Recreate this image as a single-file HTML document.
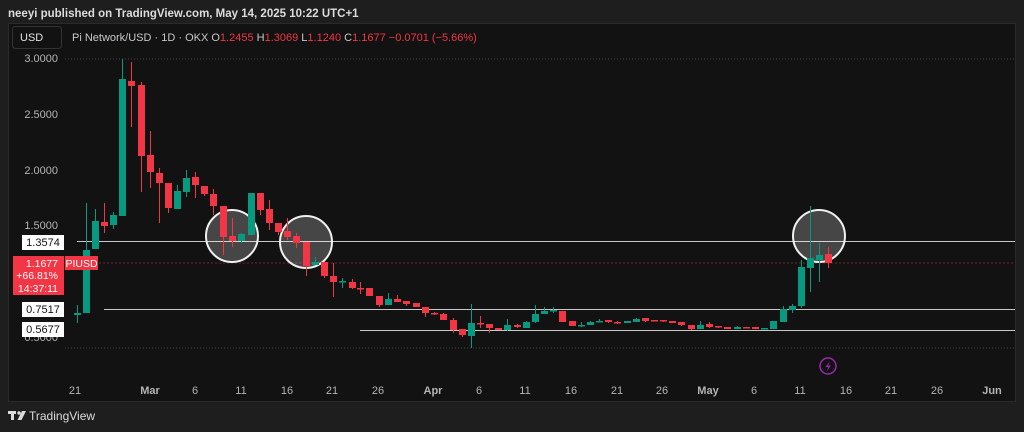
<!DOCTYPE html>
<html><head><meta charset="utf-8"><style>
html,body{margin:0;padding:0;background:#1e1e1e;width:1024px;height:432px;overflow:hidden;font-family:"Liberation Sans",sans-serif}
</style></head><body>
<svg width="1024" height="432" xmlns="http://www.w3.org/2000/svg" font-family="Liberation Sans, sans-serif">
<rect x="0" y="0" width="1024" height="432" fill="#1e1e1e"/>
<text x="8" y="17" fill="#dcdcdc" font-size="11.5" font-weight="bold">neeyi published on TradingView.com, May 14, 2025 10:22 UTC+1</text>
<rect x="8.5" y="23.5" width="1007" height="378" fill="#121212" stroke="#2a2a2a"/>
<rect x="12.5" y="26.5" width="49" height="22" rx="3" fill="#121212" stroke="#333"/>
<text x="20" y="41" fill="#e0e0e0" font-size="11">USD</text>
<text x="72" y="41" font-size="11" fill="#c8c8c8">Pi Network/USD · 1D · OKX  O<tspan fill="#f23645">1.2455</tspan>  H<tspan fill="#f23645">1.3069</tspan>  L<tspan fill="#f23645">1.1240</tspan>  C<tspan fill="#f23645">1.1677  −0.0701 (−5.66%)</tspan></text>
<g fill="#b4b4b4" font-size="11" text-anchor="end">
<text x="58" y="62">3.0000</text><text x="58" y="118">2.5000</text><text x="58" y="174">2.0000</text><text x="58" y="229">1.5000</text><text x="58" y="341">0.5000</text>
</g>
<line x1="65" y1="59" x2="1015" y2="59" stroke="#444" stroke-dasharray="1 2"/>
<line x1="65" y1="348" x2="1015" y2="348" stroke="#444" stroke-dasharray="1 2"/>
<line x1="95" y1="263" x2="1015" y2="263" stroke="#6a2a30" stroke-dasharray="2 2"/>
<line x1="77" y1="241.5" x2="1015" y2="241.5" stroke="#c8c8c8"/>
<line x1="104" y1="309.5" x2="1015" y2="309.5" stroke="#c8c8c8"/>
<line x1="360" y1="330.5" x2="1015" y2="330.5" stroke="#c8c8c8"/>

<circle cx="232" cy="236" r="26" fill="rgba(255,255,255,0.22)" stroke="#f0f0f0" stroke-width="2"/>
<circle cx="306" cy="242" r="26" fill="rgba(255,255,255,0.22)" stroke="#f0f0f0" stroke-width="2"/>
<circle cx="819" cy="236" r="26" fill="rgba(255,255,255,0.22)" stroke="#f0f0f0" stroke-width="2"/>

<path stroke="#089981" fill="none" d="M77.5 305V323M86.5 203V313M95.5 209V249M113.5 212V229M122.5 59V216M177.5 185V209M186.5 170V197M241.5 233V243M251.5 193V235M315.5 257V265M342.5 278V288M388.5 293V305M471.5 304V348M507.5 319V331M526.5 321V328M535.5 305V323M544.5 307V314M553.5 307V313M581.5 322V327M590.5 321V325M599.5 319V322M627.5 321V323M636.5 318V322M700.5 321V329M737.5 326V329M764.5 328V329M773.5 321V329M783.5 306V322M792.5 304V313M801.5 260V308"/>
<g fill="#089981">
<rect x="74" y="313" width="7" height="2"/><rect x="83" y="250" width="7" height="63"/><rect x="92" y="221" width="7" height="28"/><rect x="110" y="215" width="7" height="10"/><rect x="119" y="79" width="7" height="137"/><rect x="174" y="191" width="7" height="18"/><rect x="183" y="178" width="7" height="14"/><rect x="238" y="234" width="7" height="7"/><rect x="248" y="193" width="7" height="42"/><rect x="312" y="262" width="7" height="3"/><rect x="339" y="281" width="7" height="1.5"/><rect x="385" y="299" width="7" height="6"/><rect x="468" y="323" width="7" height="13"/><rect x="504" y="325" width="7" height="5"/><rect x="523" y="322" width="7" height="6"/><rect x="532" y="314" width="7" height="8"/><rect x="541" y="311" width="7" height="3"/><rect x="550" y="310" width="7" height="1.5"/><rect x="578" y="325" width="7" height="1.5"/><rect x="587" y="322" width="7" height="3"/><rect x="596" y="321" width="7" height="1.5"/><rect x="624" y="321" width="7" height="2"/><rect x="633" y="319" width="7" height="3"/><rect x="697" y="325" width="7" height="4"/><rect x="734" y="327" width="7" height="2"/><rect x="761" y="328" width="7" height="1.5"/><rect x="770" y="321" width="7" height="8"/><rect x="780" y="309" width="7" height="13"/><rect x="789" y="306" width="7" height="4"/><rect x="798" y="267" width="7" height="39"/>
</g>
<path stroke="#f23645" fill="none" d="M104.5 203V233M131.5 62V127M141.5 82V192M150.5 131V188M159.5 168V223M168.5 183V213M195.5 172V198M204.5 186V196M213.5 189V215M223.5 206V255M232.5 218V247M260.5 193V215M269.5 200V230M278.5 223V235M287.5 218V240M296.5 233V248M306.5 242V276M324.5 262V278M333.5 263V297M352.5 279V289M360.5 282V294M379.5 296V307M397.5 295V302M406.5 301V306M425.5 307V317M434.5 312V315M443.5 313V320M453.5 318V333M462.5 329V337M480.5 316V328M489.5 324V333M517.5 324V328M608.5 320V323M617.5 321V324M645.5 318V322M663.5 320V322M681.5 322V326M691.5 325V330M709.5 322V328M718.5 326V328"/>
<g fill="#f23645">
<rect x="101" y="222" width="7" height="4"/><rect x="128" y="81" width="7" height="5"/><rect x="138" y="85" width="7" height="71"/><rect x="147" y="155" width="7" height="17"/><rect x="156" y="173" width="7" height="10"/><rect x="165" y="183" width="7" height="25"/><rect x="192" y="177" width="7" height="8"/><rect x="201" y="186" width="7" height="8"/><rect x="210" y="194" width="7" height="12"/><rect x="220" y="206" width="7" height="31"/><rect x="229" y="236" width="7" height="5"/><rect x="257" y="193" width="7" height="17"/><rect x="266" y="209" width="7" height="14"/><rect x="275" y="223" width="7" height="9"/><rect x="284" y="231" width="7" height="6"/><rect x="293" y="236" width="7" height="7"/><rect x="303" y="242" width="7" height="24"/><rect x="321" y="262" width="7" height="14"/><rect x="330" y="276" width="7" height="6"/><rect x="349" y="282" width="7" height="6"/><rect x="357" y="288" width="7" height="1.5"/><rect x="366" y="288" width="7" height="8"/><rect x="376" y="296" width="7" height="9"/><rect x="394" y="299" width="7" height="3"/><rect x="403" y="301" width="7" height="3"/><rect x="413" y="303" width="7" height="4"/><rect x="422" y="307" width="7" height="6"/><rect x="431" y="313" width="7" height="1.5"/><rect x="440" y="314" width="7" height="6"/><rect x="450" y="320" width="7" height="10"/><rect x="459" y="329" width="7" height="6"/><rect x="477" y="323" width="7" height="1.5"/><rect x="486" y="324" width="7" height="4"/><rect x="495" y="328" width="7" height="2"/><rect x="514" y="325" width="7" height="2"/><rect x="559" y="311" width="7" height="11"/><rect x="569" y="321" width="7" height="5"/><rect x="605" y="320" width="7" height="2"/><rect x="614" y="322" width="7" height="1.5"/><rect x="642" y="318" width="7" height="3"/><rect x="651" y="320" width="7" height="1.5"/><rect x="660" y="320" width="7" height="1.5"/><rect x="669" y="321" width="7" height="2"/><rect x="678" y="322" width="7" height="3"/><rect x="688" y="325" width="7" height="4"/><rect x="706" y="324" width="7" height="3"/><rect x="715" y="326" width="7" height="1.5"/><rect x="724" y="327" width="7" height="2"/><rect x="743" y="327" width="7" height="1.5"/><rect x="752" y="327" width="7" height="2"/>
</g>

<path stroke="#089981" fill="none" d="M810.5 206V292M819.5 243V282"/>
<rect x="807" y="258" width="7" height="10" fill="#089981"/><rect x="816" y="255" width="7" height="5" fill="#089981"/>
<path stroke="#f23645" fill="none" d="M828.5 247V268"/>
<rect x="825" y="254" width="7" height="9" fill="#f23645"/>

<rect x="22" y="235" width="42" height="15" fill="#fff"/><text x="43" y="246" text-anchor="middle" font-size="11" fill="#111">1.3574</text>
<rect x="22" y="302" width="42" height="15" fill="#fff"/><text x="43" y="313" text-anchor="middle" font-size="11" fill="#111">0.7517</text>
<rect x="22" y="322" width="42" height="15" fill="#fff"/><text x="43" y="333" text-anchor="middle" font-size="11" fill="#111">0.5677</text>
<rect x="13" y="256" width="51" height="39" fill="#f23645"/>
<g fill="#fff" font-size="10.5" text-anchor="end"><text x="58" y="267">1.1677</text><text x="58" y="279">+66.81%</text><text x="58" y="292">14:37:11</text></g>
<rect x="65" y="256" width="33" height="14" fill="#f23645"/><text x="81.5" y="267" text-anchor="middle" font-size="10.5" fill="#fff">PIUSD</text>
<circle cx="828" cy="366" r="8" fill="none" stroke="#9c27b0" stroke-width="1.5"/>
<path d="M830 361 L825.5 367 L828.5 367 L826.5 371.5 L831 365.5 L828 365.5 Z" fill="#9c27b0"/>
<g fill="#b4b4b4" font-size="11" text-anchor="middle">
<text x="75" y="394">21</text><text x="150" y="394" font-weight="bold">Mar</text><text x="195" y="394">6</text><text x="241" y="394">11</text><text x="287" y="394">16</text><text x="332" y="394">21</text><text x="378" y="394">26</text><text x="433" y="394" font-weight="bold">Apr</text><text x="479" y="394">6</text><text x="525" y="394">11</text><text x="571" y="394">16</text><text x="617" y="394">21</text><text x="662" y="394">26</text><text x="708" y="394" font-weight="bold">May</text><text x="754" y="394">6</text><text x="800" y="394">11</text><text x="846" y="394">16</text><text x="891" y="394">21</text><text x="937" y="394">26</text><text x="992" y="394" font-weight="bold">Jun</text>
</g>
<g fill="#dcdcdc">
<rect x="8" y="411" width="8" height="3"/><rect x="11" y="411" width="3" height="9"/>
<circle cx="19" cy="413" r="1.7"/><path d="M22 411 L26 411 L21.5 420 L17.5 420 Z"/>
</g>
<text x="29" y="420" fill="#dcdcdc" font-size="12">TradingView</text>
</svg>
</body></html>
